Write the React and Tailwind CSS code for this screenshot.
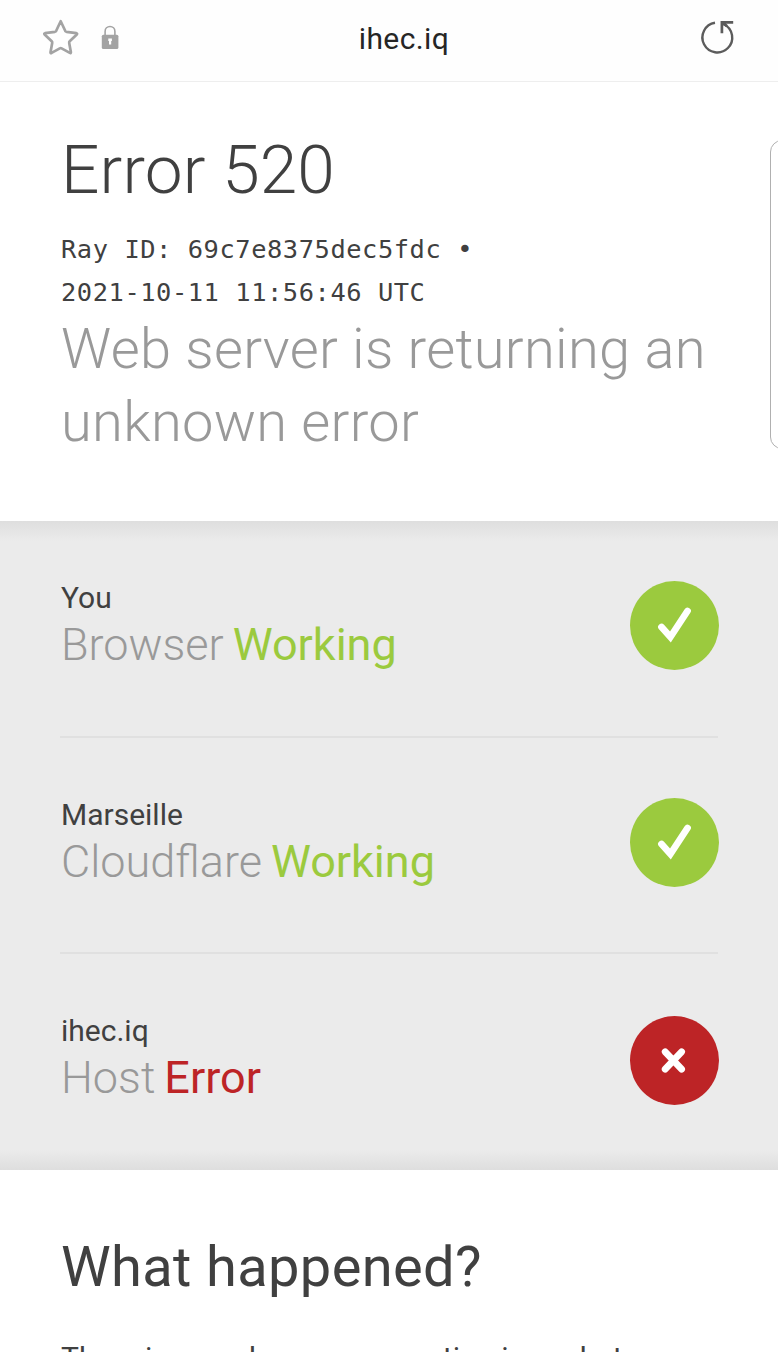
import clsx from "clsx";

const statuses = [
    { place: "You", name: "Browser", status: "Working", ok: true },
    { place: "Marseille", name: "Cloudflare", status: "Working", ok: true },
    { place: "ihec.iq", name: "Host", status: "Error", ok: false },
];

function AddressBar() {
    return (
        <header className="flex h-[82px] items-start justify-between border-b border-[#eeeeee] bg-[#fefefe] pr-[42px] pl-[42px]">
            <div className="flex w-[134px] pt-[18px]">
                <svg className="h-10 w-[38px]" viewBox="0 0 38 40" fill="none" stroke="#a3a3a3" strokeWidth="2.7" strokeLinejoin="round">
                    <path d="M18.7 3.2L23.2 12.8Q23.6 13.6 24.5 13.8L34.4 15.2Q35.6 15.5 34.8 16.5L27.7 23.3Q27 24 27.2 25L28.9 34.2Q29 35.5 27.8 34.9L19.6 30.4Q18.7 29.9 17.8 30.4L9.6 34.9Q8.3 35.5 8.5 34.2L10.2 25Q10.4 24 9.7 23.3L2.6 16.5Q1.8 15.5 3 15.2L12.9 13.8Q13.8 13.6 14.2 12.8Z" />
                </svg>
                <svg className="ml-[21px] h-10 w-[18px]" viewBox="0 0 18 40">
                    <path d="M4.1 18V13.4a4.9 4.9 0 0 1 9.8 0V18" fill="none" stroke="#a3a3a3" strokeWidth="1.6" />
                    <rect x="0.8" y="16.7" width="16.6" height="14.3" rx="1.6" fill="#a3a3a3" />
                    <path d="M7.3 20.5h3.6v2.6h-.7v3.5h-2.2v-3.5h-.7z" fill="#fff" />
                </svg>
            </div>
            <div className="pt-[19px] text-[30px] leading-[40px] tracking-[0.4px] text-[#262626]">ihec.iq</div>
            <div className="flex w-[104px] justify-end pt-[18px]">
                <svg className="h-10 w-[38px]" viewBox="0 0 38 40" fill="none" stroke="#5c5c5c" strokeWidth="2.4">
                    <path d="M17 4.8A14.9 14.9 0 1 0 26 6.2" />
                    <path d="M23.9 15.3V4.4H35.2M24.4 4.8L29 8.2" strokeWidth="2.7" />
                </svg>
            </div>
        </header>
    );
}

function StatusIcon({ ok }) {
    return (
        <svg
            className={clsx("-mr-px size-[89px]", ok ? "mt-[5px]" : "mt-[7px]")}
            viewBox="0 0 89 89"
            fill="none"
            stroke="#fff"
            strokeLinecap="round"
        >
            <circle cx="44.5" cy="44.5" r="44.5" fill={ok ? "#9bca3e" : "#bd2426"} stroke="none" />
            {ok ? (
                <path d="M31.5 46L40.4 56L57.5 30" strokeWidth="6.8" />
            ) : (
                <path d="M35.2 35.8L51.6 53.2M51.6 35.8L35.2 53.2" strokeWidth="6.8" />
            )}
        </svg>
    );
}

export default function App() {
    return (
        <div className="relative h-[1352px] w-[778px] overflow-hidden bg-white font-['Roboto',sans-serif] text-[#404040]">
            <AddressBar />

            <section className="h-[439px] px-[61px] pt-[48px]">
                <h1 className="text-[67.5px] leading-[80px] font-light tracking-[0.15px]">Error 520</h1>
                <p className="mt-[18px] font-['DejaVu_Sans_Mono',monospace] text-[25.4px] leading-[43px] tracking-[0.56px]">
                    Ray ID: 69c7e8375dec5fdc •<br />
                    2021-10-11 11:56:46 UTC
                </p>
                <h2 className="-mt-px text-[56px] leading-[73px] font-light tracking-[0.3px] whitespace-nowrap text-[#999999]">
                    Web server is returning an
                    <br />
                    unknown error
                </h2>
            </section>

            <section className="h-[649px] bg-[#ebebeb] bg-[linear-gradient(#dedede,#ebebeb_20px,#ebebeb_calc(100%_-_20px),#dedede)] px-[60px]">
                {statuses.map((item, i) => (
                    <div
                        key={item.place}
                        className={clsx("flex h-[216.5px] justify-between pt-[55px]", i < 2 && "border-b-2 border-[#e0e0e0]")}
                    >
                        <div className="pl-px">
                            <div className="text-[30px] leading-[44px]">{item.place}</div>
                            <div className="text-[45px] leading-[50px] font-light [word-spacing:-2px] text-[#999999]">
                                {item.name}{" "}
                                <span className={clsx("font-normal", item.ok ? "text-[#9bca3e]" : "text-[#bd2426]")}>{item.status}</span>
                            </div>
                        </div>
                        <StatusIcon ok={item.ok} />
                    </div>
                ))}
            </section>

            <section className="px-[61px] pt-[65px]">
                <h2 className="text-[56px] leading-[64px] tracking-[0.36px]">What happened?</h2>
                <p className="mt-[37px] text-[30px] leading-[44px] tracking-[0.06px] whitespace-nowrap">There is an unknown connection issue between</p>
            </section>

            {/* side panel handle, cut off by the screen edge */}
            <div className="absolute top-[140px] left-[770px] h-[309px] w-10 rounded-[12px] border border-[#b0b0b0] bg-white" />
        </div>
    );
}
